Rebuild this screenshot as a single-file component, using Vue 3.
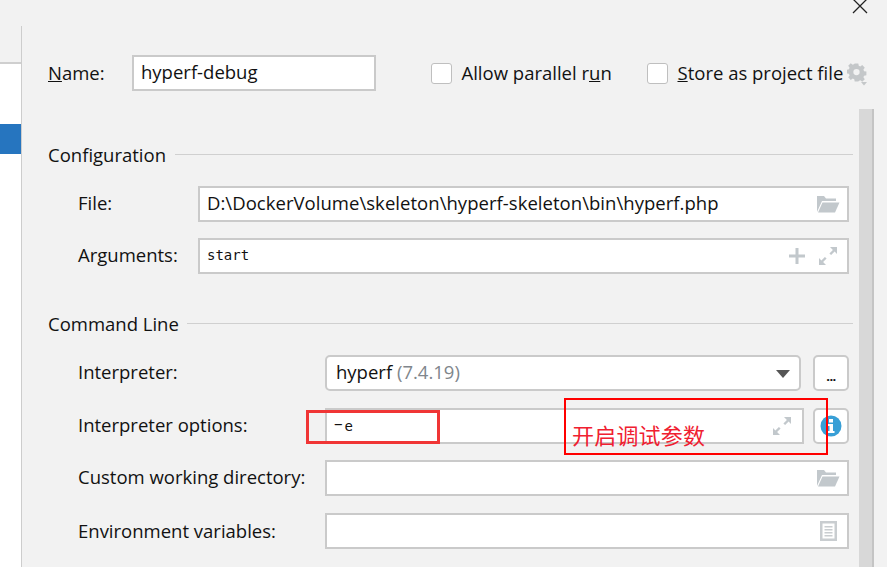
<template>
  <div class="dialog">
    <aside class="sidebar">
      <div class="list">
        <div class="list-row"></div>
        <div class="list-row selected"></div>
      </div>
    </aside>

    <main class="content">
      <div class="top-row">
        <label class="name-label"><u>N</u>ame:</label>
        <div class="field name-field">hyperf-debug</div>
        <label class="check check-parallel"><span class="box"></span><span>Allow parallel r<u>u</u>n</span></label>
        <label class="check check-store"><span class="box"></span><span><u>S</u>tore as project file</span></label>
        <svg class="gear" width="21" height="23" viewBox="0 0 21 23">
          <path fill="#c4c7c9" fill-rule="evenodd" d="M8 0h4l.5 2.600 1.700.7L16.400 1.800l2.800 2.800-1.500 2.200.7 1.700 2.600.5v4l-2.600.5-.7 1.700 1.500 2.200-2.800 2.800-2.200-1.500-1.700.7L12 20H8l-.5-2.600-1.700-.7-2.200 1.500-2.800-2.800 1.500-2.200-.7-1.700L-1 11V7l2.600-.5.700-1.700L.8 2.600l2.800-2.800 2.200 1.500 1.700-.7z M10 6a3.500 3.500 0 1 0 0 7 3.500 3.500 0 0 0 0-7z" transform="translate(0.500 0.500) scale(0.9)" />
          <path fill="#c4c7c9" d="M14 19h6l-3 3.500z" />
        </svg>
      </div>

      <section class="section config">
        <div class="section-head"><span>Configuration</span><i></i></div>
        <div class="rows config-rows">
          <label>File:</label>
          <div class="field">
            <span class="path">D:\DockerVolume\skeleton\hyperf-skeleton\bin\hyperf.php</span>
            <svg class="trail folder" width="24" height="18" viewBox="0 0 24 18"><path fill="#c2c8cc" d="M1 1h7l2 2.500h10V6H6L1 17z" /><path fill="#c2c8cc" d="M6.500 7.500H23.500L19 17.500H2z" /></svg>
          </div>
          <label>Arguments:</label>
          <div class="field mono">
            start
            <span class="trail trail-group">
              <svg width="16" height="16" viewBox="0 0 16 16"><path fill="#c2c8cc" d="M6.500 0h3v6.500H16v3H9.500V16h-3V9.500H0v-3h6.500z" /></svg>
              <svg class="expand" width="20" height="20" viewBox="0 0 20 20"><path fill="#c2c8cc" d="M12 1h7v7l-2.400-2.400-3.500 3.500-1.700-1.700 3.500-3.500zM1 19v-7l2.400 2.400 3.500-3.500 1.700 1.700-3.500 3.500L8 19z" /></svg>
            </span>
          </div>
        </div>
      </section>

      <section class="section command">
        <div class="section-head"><span>Command Line</span><i></i></div>
        <div class="rows command-rows">
          <label>Interpreter:</label>
          <div class="with-button">
            <div class="field round select">
              hyperf&nbsp;<span class="version">(7.4.19)</span>
              <span class="caret"></span>
            </div>
            <button class="side-btn dots">...</button>
          </div>
          <label class="keep">Interpreter options:</label>
          <div class="with-button">
            <div class="field options mono">
              <span><span class="dash">−</span>e</span>
              <svg class="trail wide" width="20" height="20" viewBox="0 0 20 20"><path fill="#c2c8cc" d="M12 1h7v7l-2.400-2.400-3.500 3.500-1.700-1.700 3.500-3.500zM1 19v-7l2.400 2.400 3.500-3.500 1.700 1.700-3.500 3.500L8 19z" /></svg>
            </div>
            <button class="side-btn">
              <svg width="22" height="22" viewBox="0 0 22 22"><circle cx="11" cy="11" r="10.500" fill="#389fd6" /><rect x="9" y="4" width="4" height="3.500" fill="#fff" /><path fill="#fff" d="M8 9h5v7h1.500v2h-6.500v-2H9.500v-5H8z" /></svg>
            </button>
          </div>
          <label>Custom working directory:</label>
          <div class="field">
            <svg class="trail folder" width="24" height="18" viewBox="0 0 24 18"><path fill="#c2c8cc" d="M1 1h7l2 2.500h10V6H6L1 17z" /><path fill="#c2c8cc" d="M6.500 7.500H23.500L19 17.500H2z" /></svg>
          </div>
          <label class="env">Environment variables:</label>
          <div class="field">
            <svg class="trail wide" width="17" height="20" viewBox="0 0 17 20"><path fill="#c9cdd0" fill-rule="evenodd" d="M0 0h17v20H0zM2.500 2.500v15h12v-15z" /><path fill="#c9cdd0" d="M4.500 5h8v1.500h-8zM4.500 8h8v1.500h-8zM4.500 11h8v1.500h-8zM4.500 14h8v1.500h-8z" /></svg>
          </div>
        </div>
      </section>

      <div class="scrollbar"></div>
    </main>

    <svg class="close" width="16" height="14" viewBox="0 0 16 14"><path stroke="#222" stroke-width="1.300" fill="none" d="M1 -1L15 13M15 -1L1 13" /></svg>
    <div class="mark mark-e"></div>
    <div class="mark mark-note"><span>开启调试参数</span></div>
  </div>
</template>

<script setup>
</script>

<style>
html,
body {
  margin: 0;
  background: #f2f2f2;
}
</style>

<style scoped>
.dialog {
  position: relative;
  display: flex;
  width: 887px;
  height: 567px;
  overflow: hidden;
  background: #f2f2f2;
  color: #111;
  font-family: "Open Sans", "Noto Sans", sans-serif;
  font-size: 18.500px;
}

.sidebar {
  width: 21px;
  flex: none;
}

.list {
  margin-top: 62px;
  height: 505px;
  border-top: 2px solid #cfcfcf;
  background: #fff;
  padding-top: 60px;
  box-sizing: border-box;
}

.list-row.selected {
  height: 30px;
  background: #2675bf;
}

.content {
  position: relative;
  width: 866px;
  margin-top: 26px;
  border-left: 1px solid #cdcdcd;
  padding: 29px 0 0 26px;
  box-sizing: border-box;
}

.top-row {
  display: flex;
  align-items: center;
  height: 36px;
}

.name-label {
  width: 84px;
  padding-bottom: 2px;
}

.rows label {
  padding-bottom: 4px;
}

.rows label.keep {
  padding-bottom: 2px;
}

.rows label.env {
  padding-bottom: 0;
}

.field {
  position: relative;
  display: flex;
  align-items: center;
  height: 36px;
  box-sizing: border-box;
  border: 2px solid #cacaca;
  background: #fff;
  padding: 0 0 4px 7px;
  white-space: nowrap;
}

.name-field {
  width: 244px;
}

.path {
  letter-spacing: 0.040px;
}

.check {
  display: flex;
  align-items: center;
  gap: 9.500px;
  white-space: nowrap;
}

.check span:last-child {
  padding-bottom: 2px;
}

.check-parallel {
  margin-left: 55px;
  width: 216px;
}

.box {
  width: 21px;
  height: 21px;
  box-sizing: border-box;
  border: 1.500px solid #bfbfbf;
  border-radius: 3px;
  background: #fff;
}

.gear {
  margin: 3px 0 0 4px;
}

.section-head {
  display: flex;
  align-items: center;
  gap: 8.500px;
  width: 805px;
  line-height: 26px;
}

.section-head i {
  flex: 1;
  height: 1px;
  margin-top: -2px;
  background: #d0d0d0;
}

.config {
  margin-top: 51px;
}

.command {
  margin-top: 37px;
}

.rows {
  display: grid;
  align-items: center;
  width: 771px;
  margin-left: 30px;
  grid-auto-rows: 36px;
}

.config-rows {
  margin-top: 18px;
  grid-template-columns: 120px 651px;
  row-gap: 16px;
}

.command-rows {
  margin-top: 18px;
  grid-template-columns: 247px 524px;
  row-gap: 16.500px;
}

.mono {
  font-family: "DejaVu Sans Mono", monospace;
  font-size: 14px;
  padding-bottom: 2px;
}

.trail {
  position: absolute;
  right: 8px;
  top: 50%;
  transform: translateY(-50%);
}

.folder {
  right: 7px;
}

.wide {
  right: 10px;
}

.trail-group {
  display: flex;
  align-items: center;
  gap: 13px;
  right: 9px;
}

.with-button {
  display: flex;
  justify-content: space-between;
}

.round {
  border-radius: 5px;
}

.select {
  width: 476px;
  padding-left: 9px;
}

.version {
  color: #80868c;
}

.caret {
  position: absolute;
  right: 9px;
  top: 13px;
  border-left: 7px solid transparent;
  border-right: 7px solid transparent;
  border-top: 8px solid #555;
}

.options {
  width: 479px;
  height: 36px;
}

.dash {
  vertical-align: 2px;
  margin-right: 2px;
}

.side-btn {
  display: flex;
  align-items: center;
  justify-content: center;
  width: 36px;
  height: 36px;
  padding: 0;
  box-sizing: border-box;
  border: 2px solid #cacaca;
  border-radius: 5px;
  background: #fff;
  color: #111;
  font-family: inherit;
  font-size: 18px;
  line-height: 1;
}

.dots {
  padding-top: 7px;
  font-size: 13px;
  font-weight: 700;
  letter-spacing: -0.500px;
}

.scrollbar {
  position: absolute;
  left: 837px;
  top: 83px;
  width: 13px;
  height: 460px;
  background: #d8d8d8;
  border-right: 2px solid #c4c4c4;
}

.close {
  position: absolute;
  right: 19px;
  top: 0;
}

.mark {
  position: absolute;
  box-sizing: border-box;
}

.mark-e {
  left: 306px;
  top: 410px;
  width: 134px;
  height: 34px;
  border: 3px solid #f03535;
}

.mark-note {
  left: 564px;
  top: 398px;
  width: 264px;
  height: 57px;
  border: 2px solid #f00;
  padding: 19px 0 0 6px;
  color: #f02030;
  font-family: "Noto Sans CJK SC", sans-serif;
  font-size: 22px;
  letter-spacing: 0.200px;
  line-height: 30px;
}
</style>
